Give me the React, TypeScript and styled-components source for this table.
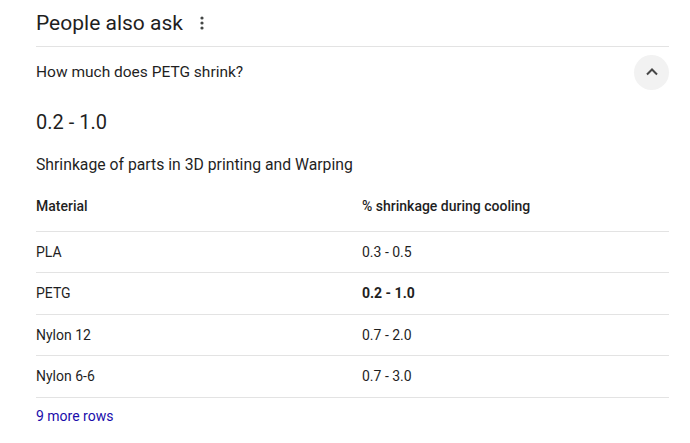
import React from "react";
import styled, { createGlobalStyle } from "styled-components";

const Global = createGlobalStyle`
  html, body { margin: 0; padding: 0; background: #fff; }
  body { font-family: Roboto, "Noto Sans", Arial, sans-serif; color: #1f1f1f; }
`;

const Wrap = styled.div`
  padding-left: 36px;
  width: 633px;
`;

const Header = styled.div`
  height: 46px;
  display: flex;
  align-items: center;
  gap: 11px;
  border-bottom: 1px solid #e3e3e3;
`;

const Title = styled.h2`
  margin: 0;
  font-size: 21px;
  font-weight: 400;
  line-height: 28px;
  color: #1f1f1f;
`;

const Dots = styled.button`
  border: 0;
  background: none;
  padding: 0;
  width: 16px;
  height: 20px;
  display: flex;
  align-items: center;
  justify-content: center;
  color: #444746;
`;

const QuestionRow = styled.div`
  height: 50px;
  display: flex;
  align-items: center;
  justify-content: space-between;
`;

const Question = styled.div`
  font-size: 15.5px;
  line-height: 24px;
`;

const ToggleBtn = styled.div`
  width: 35px;
  height: 35px;
  border-radius: 50%;
  background: #f2f2f2;
  display: flex;
  align-items: center;
  justify-content: center;
  color: #474747;
`;

const BigValue = styled.div`
  margin-top: 11px;
  font-size: 20px;
  line-height: 28px;
`;

const Subtitle = styled.div`
  margin-top: 17px;
  font-size: 15.75px;
  line-height: 24px;
`;

const Table = styled.table`
  width: 100%;
  border-collapse: collapse;
  font-size: 14px;
`;

const Th = styled.th`
  text-align: left;
  font-weight: 500;
  padding: 19px 0 15px;
  line-height: 20px;
  border-bottom: 1px solid #e3e3e3;
  &:first-child { width: 326px; }
`;

const Td = styled.td<{ $bold?: boolean }>`
  padding: 10px 0 10.4px;
  line-height: 20px;
  font-weight: ${(p) => (p.$bold ? 700 : 400)};
  border-bottom: 1px solid #e3e3e3;
`;

const More = styled.a`
  display: block;
  margin-top: 8px;
  font-size: 14px;
  line-height: 20px;
  color: #1a0dab;
  text-decoration: none;
`;

const rows: [string, string, boolean][] = [
  ["PLA", "0.3 - 0.5", false],
  ["PETG", "0.2 - 1.0", true],
  ["Nylon 12", "0.7 - 2.0", false],
  ["Nylon 6-6", "0.7 - 3.0", false],
];

export default function App() {
  return (
    <>
      <Global />
      <Wrap>
        <Header>
          <Title>People also ask</Title>
          <Dots aria-label="More options">
            <svg width="4" height="14" viewBox="0 0 4 14" fill="currentColor">
              <circle cx="2" cy="2" r="1.6" />
              <circle cx="2" cy="7" r="1.6" />
              <circle cx="2" cy="12" r="1.6" />
            </svg>
          </Dots>
        </Header>
        <QuestionRow>
          <Question>How much does PETG shrink?</Question>
          <ToggleBtn>
            <svg width="14" height="14" viewBox="0 0 14 14" fill="none" stroke="currentColor" strokeWidth="2">
              <path d="M2 9.5 L7 4.5 L12 9.5" />
            </svg>
          </ToggleBtn>
        </QuestionRow>
        <BigValue>0.2 - 1.0</BigValue>
        <Subtitle>Shrinkage of parts in 3D printing and Warping</Subtitle>
        <Table>
          <thead>
            <tr>
              <Th>Material</Th>
              <Th>% shrinkage during cooling</Th>
            </tr>
          </thead>
          <tbody>
            {rows.map(([m, v, b]) => (
              <tr key={m}>
                <Td>{m}</Td>
                <Td $bold={b}>{v}</Td>
              </tr>
            ))}
          </tbody>
        </Table>
        <More href="#">9 more rows</More>
      </Wrap>
    </>
  );
}
